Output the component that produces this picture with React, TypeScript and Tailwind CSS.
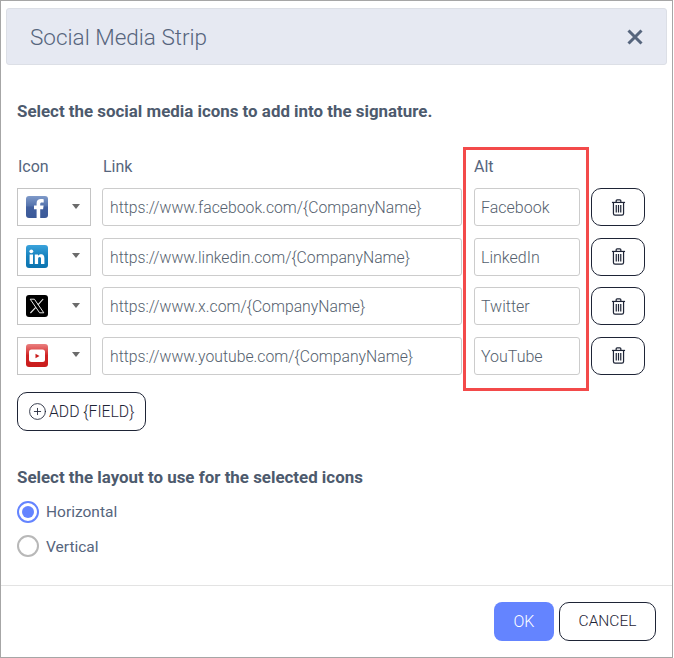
import { CirclePlus } from "lucide-react";

const FONT = "font-['Roboto',sans-serif]";

const FacebookIcon = () => (
  <svg width="22" height="22" viewBox="0 0 22 22">
    <defs>
      <linearGradient id="fb" x1="0" y1="0" x2="0" y2="1">
        <stop offset="0" stopColor="#7f9ac9" />
        <stop offset="0.45" stopColor="#5573ad" />
        <stop offset="0.5" stopColor="#42609f" />
        <stop offset="1" stopColor="#3b5998" />
      </linearGradient>
    </defs>
    <rect width="22" height="22" rx="3" fill="url(#fb)" />
    <path d="M10.6 22V13.2H8V9.6h2.6V7.2C10.6 4.4 12.4 3 14.9 3c1.2 0 2.3.1 2.8.2v3.2h-1.9c-1.3 0-1.6.6-1.6 1.5v1.7h3.4L17.1 13.2h-2.9V22z" fill="#fff" />
  </svg>
);

const LinkedinIcon = () => (
  <svg width="22" height="23" viewBox="0 0 22 23">
    <defs>
      <linearGradient id="li" x1="0" y1="0" x2="0" y2="1">
        <stop offset="0" stopColor="#3aa3dc" />
        <stop offset="0.5" stopColor="#1681bd" />
        <stop offset="1" stopColor="#0b74b0" />
      </linearGradient>
    </defs>
    <rect width="22" height="23" rx="3" fill="url(#li)" />
    <rect x="3.6" y="9.5" width="3.4" height="9.5" fill="#fff" />
    <circle cx="5.3" cy="6.3" r="1.9" fill="#fff" />
    <path d="M8.8 9.5h3.2v1.3c.6-1 1.7-1.6 3-1.6 2.4 0 3.4 1.5 3.4 4V19H15v-5.2c0-1.2-.4-1.9-1.4-1.9s-1.5.8-1.5 1.9V19H8.800z" fill="#fff" />
  </svg>
);

const XIcon = () => (
  <svg width="22" height="22" viewBox="0 0 22 22">
    <rect width="22" height="22" rx="3" fill="#000" />
    <path d="M4.200 4.200h4.200l9.400 13.600h-4.200z" fill="none" stroke="#e8e8e8" strokeWidth="1" />
    <path d="M17.200 4 11.900 9.900M9.800 12.300 4.400 18" stroke="#e8e8e8" strokeWidth="1.100" fill="none" />
  </svg>
);

const YoutubeIcon = () => (
  <svg width="22" height="23" viewBox="0 0 22 23">
    <defs>
      <linearGradient id="yt" x1="0" y1="0" x2="0" y2="1">
        <stop offset="0" stopColor="#ea8080" />
        <stop offset="0.3" stopColor="#dd4a4a" />
        <stop offset="0.5" stopColor="#cf2222" />
        <stop offset="1" stopColor="#c91c1c" />
      </linearGradient>
    </defs>
    <rect width="22" height="23" rx="3" fill="url(#yt)" />
    <rect x="3" y="5.500" width="16" height="12.500" rx="2.500" fill="#fff" />
    <path d="M9.500 9.800 13.500 12l-4 2.200z" fill="#c91c1c" />
  </svg>
);

const TrashIcon = () => (
  <svg width="15" height="17" viewBox="0 0 16 18" fill="none" stroke="#1e2436" strokeWidth="1.300">
    <path d="M1 3.600h14" />
    <path d="M5.500 3.400V1.900c0-.6.4-1 1-1h3c.6 0 1 .4 1 1v1.500" />
    <path d="M2.600 3.800v11.600c0 1 .7 1.700 1.700 1.700h7.400c1 0 1.700-.7 1.700-1.700V3.800" />
    <path d="M5.600 6.400v8M8 6.400v8M10.400 6.400v8" />
  </svg>
);

const rows = [
  { icon: <FacebookIcon />, link: "https://www.facebook.com/{CompanyName}", alt: "Facebook" },
  { icon: <LinkedinIcon />, link: "https://www.linkedin.com/{CompanyName}", alt: "LinkedIn" },
  { icon: <XIcon />, link: "https://www.x.com/{CompanyName}", alt: "Twitter" },
  { icon: <YoutubeIcon />, link: "https://www.youtube.com/{CompanyName}", alt: "YouTube" },
];

const App = () => {
  return (
    <div className={`${FONT} relative w-[674px] h-[658px] bg-white overflow-hidden`}>
      <div className="flex flex-col h-[658px] w-[673px] border-t border-l border-r border-b border-[#a6a6a6] pt-[7px]">
        {/* Header */}
        <div className="ml-[5px] mr-[5px] h-[57px] shrink-0 flex items-center justify-between rounded-[3px] border border-[#dcdfe6] bg-[#e6e9f2] pl-[23px] pr-[23px]">
          <span className="pt-[1px] text-[22.5px] font-light text-[#56657d] leading-none">Social Media Strip</span>
          <svg width="16" height="16" viewBox="0 0 16 16" stroke="#56657d" strokeWidth="3" fill="none">
            <path d="M1.500 1.500 14.500 14.500M14.500 1.500 1.500 14.500" />
          </svg>
        </div>

        {/* Body */}
        <div className="flex-1 pl-4 pr-[26px] relative">
          <p className="mt-[36px] text-[16.9px] leading-[20px] font-bold text-[#4d5a6d]">
            Select the social media icons to add into the signature.
          </p>

          <div className="mt-[36px] flex text-[16px] leading-[20px] text-[#56657d]">
            <span className="w-[85px] pl-[1px]">Icon</span>
            <span className="w-[372px] pl-[1px]">Link</span>
            <span>Alt</span>
          </div>

          <div className="mt-[11px] flex flex-col gap-[11.5px]">
            {rows.map((row) => (
              <div key={row.alt} className="flex h-[38px]">
                <div className="w-[74px] flex items-center border border-[#c4c4c4] pl-2 pr-[10px] justify-between">
                  {row.icon}
                  <span className="mb-[2px] w-0 h-0 border-l-[4.5px] border-r-[4.5px] border-t-[5px] border-l-transparent border-r-transparent border-t-[#6b6b6b]" />
                </div>
                <div className="ml-[11px] w-[360px] flex items-center rounded-[3px] border border-[#cccccc] pl-[7px] pt-[2px] text-[15.75px] text-[#555f6e] font-light">
                  {row.link}
                </div>
                <div className="ml-3 w-[106px] flex items-center rounded-[3px] border border-[#cccccc] pl-[6px] pt-[2px] text-[16px] text-[#555f6e] font-light">
                  {row.alt}
                </div>
                <button className="ml-[11px] w-[54px] flex items-center justify-center rounded-[10px] border border-[#1e2436]">
                  <TrashIcon />
                </button>
              </div>
            ))}
          </div>

          <button className="mt-[17px] w-[129px] h-[39px] flex items-center gap-[2px] pl-[10px] pt-[1px] rounded-[10px] border border-[#1e2436] text-[15.75px] font-light text-[#1e2436]">
            <CirclePlus size={19} strokeWidth={1.1} />
            ADD {"{FIELD}"}
          </button>

          <p className="mt-[36px] text-[16.9px] leading-[20px] font-bold text-[#4d5a6d]">
            Select the layout to use for the selected icons
          </p>

          <div className="mt-[14px] flex flex-col gap-[12px]">
            <div className="flex items-center h-[22px] gap-[7px] text-[15.5px] text-[#56657d]">
              <span className="w-[22px] h-[22px] rounded-full border-2 border-[#6484ff] flex items-center justify-center">
                <span className="w-[12px] h-[12px] rounded-full bg-[#6484ff]" />
              </span>
              <span className="pt-[3px]">Horizontal</span>
            </div>
            <div className="flex items-center h-[22px] gap-[7px] text-[15.5px] text-[#56657d]">
              <span className="w-[22px] h-[22px] rounded-full border-2 border-[#b8b8b8]" />
              <span className="pt-[5px]">Vertical</span>
            </div>
          </div>
        </div>

        {/* Footer */}
        <div className="h-[72px] shrink-0 border-t border-[#e3e3e3] flex items-start justify-end pt-4 pr-4 gap-[5px]">
          <button className="w-[60px] h-[39px] rounded-[8px] bg-[#6484ff] text-[16px] font-light text-white">OK</button>
          <button className="w-[97px] h-[39px] rounded-[10px] border border-[#1e2436] text-[15.5px] font-light text-[#1e2436]">CANCEL</button>
        </div>
      </div>

      {/* Red annotation around the Alt column */}
      <div className="absolute left-[463px] top-[147px] w-[126px] h-[244px] border-[3px] border-[#f34a4a]" />
    </div>
  );
};

export default App;
